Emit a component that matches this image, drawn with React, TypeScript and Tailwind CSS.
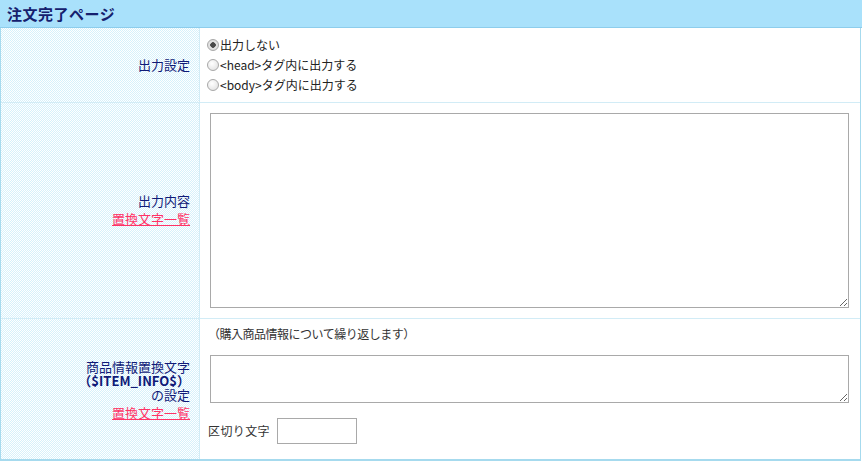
import React from "react";

const labelBg =
  "bg-[repeating-conic-gradient(#d6f1fb_0%_25%,#ffffff_0%_50%)] bg-[length:2px_2px]";

function Radio({ checked, label }: { checked?: boolean; label: React.ReactNode }) {
  return (
    <label className="flex items-center h-[20px]">
      <input
        type="radio"
        name="out"
        defaultChecked={checked}
        className="appearance-none m-0 mr-[1px] w-[12px] h-[12px] rounded-full border border-[#a8a8a8] bg-[radial-gradient(circle_at_40%_35%,#ffffff_0,#dcdcdc_100%)] checked:bg-[radial-gradient(circle,#4a4a4a_0,#4a4a4a_2.5px,#e4e4e4_3px,#d8d8d8_100%)]"
      />
      <span>{label}</span>
    </label>
  );
}

export default function App() {
  return (
    <div
      className="w-[862px] h-[461px] bg-white text-[12px] text-[#222]"
      style={{ fontFamily: '"Noto Sans CJK JP", "Noto Sans", sans-serif' }}
    >
      <div className="h-[28px] bg-[#a9e1fb] border-b border-[#8dcdec] flex items-center pl-[7px]">
        <span className="text-[15px] font-bold text-[#15206e] leading-none tracking-[0.5px]">注文完了ページ</span>
      </div>
      <div className="w-[861px] border-l border-r border-b-2 border-[#a6daee]">
        {/* Row 1 */}
        <div className="flex border-b border-[#d2ecf6]">
          <div className={`w-[199px] shrink-0 border-r border-[#d2ecf6] ${labelBg} flex items-center justify-end pr-[9px] text-[13px] text-[#101a78]`}>
            出力設定
          </div>
          <div className="flex-1 pl-[7px] py-[7px] text-[12px] leading-[20px] text-[#222]">
            <Radio checked label="出力しない" />
            <Radio label="<head>タグ内に出力する" />
            <Radio label="<body>タグ内に出力する" />
          </div>
        </div>
        {/* Row 2 */}
        <div className="flex border-b border-[#d2ecf6]">
          <div className={`w-[199px] shrink-0 border-r border-[#d2ecf6] ${labelBg} flex flex-col items-end justify-center pr-[9px] text-[13px] text-[#101a78] leading-[18px] pb-[2px]`}>
            <span>出力内容</span>
            <a className="text-[#ff3366] underline">置換文字一覧</a>
          </div>
          <div className="flex-1 pl-[10px] pr-[11px] py-[10px]">
            <textarea className="block w-[639px] h-[195px] border border-[#a9a9a9] bg-white" />
          </div>
        </div>
        {/* Row 3 */}
        <div className="flex">
          <div className={`w-[199px] shrink-0 border-r border-[#d2ecf6] ${labelBg} flex flex-col items-end justify-center pr-[9px] text-[13px] text-[#101a78] leading-[14px] pt-[2px] text-right`}>
            <span>商品情報置換文字</span>
            <span className="font-bold">（$ITEM_INFO$）</span>
            <span>の設定</span>
            <a className="text-[#ff3366] underline mt-[3px] leading-[16px]">置換文字一覧</a>
          </div>
          <div className="flex-1 pl-[8px] pt-[7px] pb-[15px] text-[12px] text-[#333]">
            <div className="leading-[16px] tracking-[-0.5px]">（購入商品情報について繰り返します）</div>
            <textarea className="block mt-[13px] ml-[2px] w-[639px] h-[48px] border border-[#a9a9a9] bg-white" />
            <div className="flex items-center mt-[15px]">
              <span className="tracking-[0.4px]">区切り文字</span>
              <input type="text" className="ml-[7px] w-[80px] h-[26px] border border-[#a9a9a9] bg-white" />
            </div>
          </div>
        </div>
      </div>
    </div>
  );
}
